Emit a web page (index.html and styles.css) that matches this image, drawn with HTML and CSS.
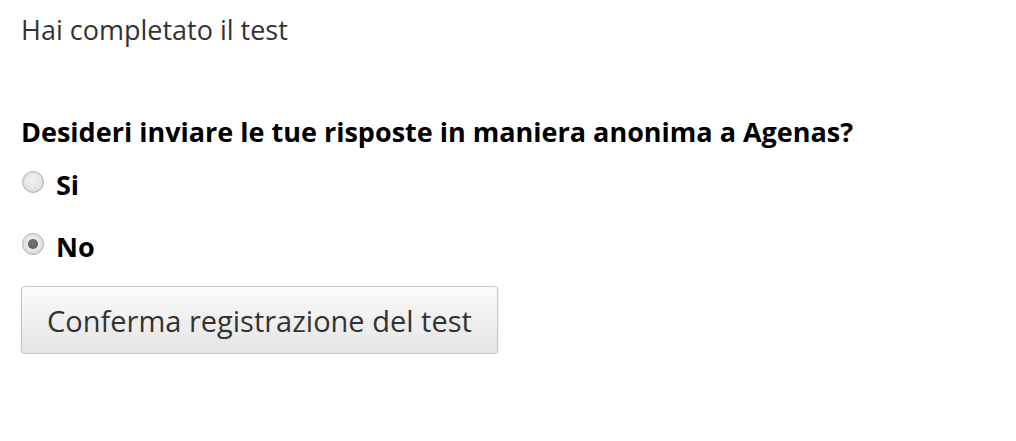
FILE: index.html
```html
<!DOCTYPE html>
<html lang="it">
<head>
<meta charset="utf-8">
<link rel="stylesheet" href="styles.css">
</head>
<body>
<div class="page">
  <p class="intro">Hai completato il test</p>
  <form class="form">
    <p class="question">Desideri inviare le tue risposte in maniera anonima a Agenas?</p>
    <label class="option"><span class="radio"></span><span class="label">Si</span></label>
    <label class="option option-no"><span class="radio checked"></span><span class="label">No</span></label>
    <button type="button" class="btn">Conferma registrazione del test</button>
  </form>
</div>
</body>
</html>
```

FILE: styles.css
```css
html, body { margin: 0; padding: 0; background: #fff; }
body { font-family: "Open Sans", sans-serif; color: #222; }
.page { padding: 12px 21px 0; }
.intro { margin: 0; font-size: 27px; line-height: 36px; color: #333; }
.form { margin-top: 66px; display: flex; flex-direction: column; align-items: flex-start; }
.question { margin: 0; font-size: 27px; font-weight: 700; line-height: 36px; color: #000; }
.option { display: flex; align-items: flex-start; gap: 12px; font-size: 27px; font-weight: 700; color: #000; height: 42px; margin-top: 14px; }
.option-no { margin-top: 20px; }
.label { line-height: 42px; }
.radio { margin-top: 7px; margin-left: 1px; width: 22px; height: 22px; border-radius: 50%; border: 1px solid #b4b4b4; background: radial-gradient(circle at 50% 40%, #f2f2f2 0%, #e0e0e0 70%, #d0d0d0 100%); box-sizing: border-box; display: flex; align-items: center; justify-content: center; box-shadow: inset 0 0 1px rgba(0,0,0,0.15); }
.radio.checked::after { content: ""; width: 10px; height: 10px; border-radius: 50%; background: radial-gradient(circle at 50% 40%, #777, #555); }
.btn { margin-top: 18px; font-family: "Open Sans", sans-serif; font-size: 29px; color: #333; padding: 0 25px; height: 68px; border: 1px solid #c6c6c6; border-radius: 4px; background: linear-gradient(#fbfbfb, #e4e4e4); box-shadow: 0 1px 2px rgba(0,0,0,0.15); }
```
